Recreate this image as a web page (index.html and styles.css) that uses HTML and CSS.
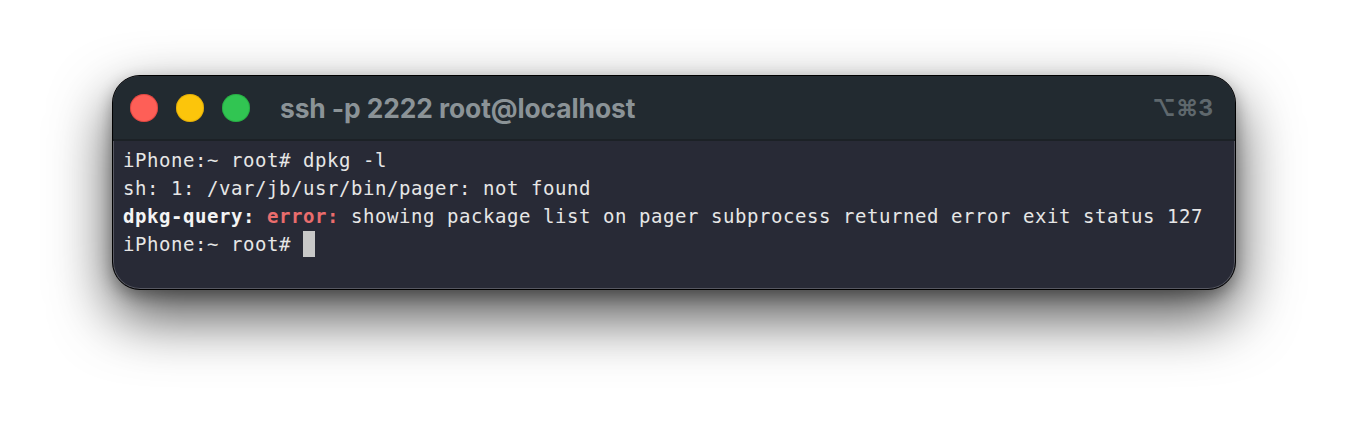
FILE: index.html
```html
<!DOCTYPE html>
<html>
<head>
<meta charset="utf-8">
<link rel="stylesheet" href="styles.css">
</head>
<body>
<div class="stage">
  <div class="window">
    <div class="titlebar">
      <div class="lights">
        <span class="light red"></span>
        <span class="light yellow"></span>
        <span class="light green"></span>
      </div>
      <div class="title">ssh -p 2222 root@localhost</div>
      <div class="shortcut">⌥⌘3</div>
    </div>
    <div class="term">
      <div class="line">iPhone:~ root# dpkg -l</div>
      <div class="line">sh: 1: /var/jb/usr/bin/pager: not found</div>
      <div class="line"><span class="bold">dpkg-query:</span> <span class="err">error:</span> showing package list on pager subprocess returned error exit status 127</div>
      <div class="line">iPhone:~ root# <span class="cursor"></span></div>
    </div>
  </div>
</div>
</body>
</html>
```
FILE: styles.css
```css
html, body {
  margin: 0;
  padding: 0;
  background: #ffffff;
  width: 1348px;
  height: 438px;
  overflow: hidden;
}
.stage {
  padding: 75px 0 0 112px;
}
.window {
  width: 1124px;
  height: 215px;
  box-sizing: border-box;
  border-radius: 28px;
  overflow: hidden;
  border: 1px solid #000;
  box-shadow: inset 0 0 0 1px rgba(255,255,255,0.22), 0 26px 60px rgba(0,0,0,0.7), 0 6px 16px rgba(0,0,0,0.3);
  background: #282a36;
  display: flex;
  flex-direction: column;
}
.titlebar {
  height: 63px;
  flex: none;
  background: #222a30;
  border-bottom: 2px solid #1c2126;
  display: flex;
  align-items: center;
  padding: 0 22px 0 17px;
  box-sizing: content-box;
}
.lights {
  display: flex;
  gap: 18px;
}
.light {
  width: 28px;
  height: 28px;
  border-radius: 50%;
  display: block;
}
.red { background: #fe5f57; box-shadow: inset 0 0 0 1px rgba(180,30,30,0.35); }
.yellow { background: #fcc50b; box-shadow: inset 0 0 0 1px rgba(180,130,0,0.3); }
.green { background: #31c552; box-shadow: inset 0 0 0 1px rgba(20,130,40,0.3); }
.title {
  margin-left: 30px;
  font-family: "Inter", "Liberation Sans", sans-serif;
  font-weight: 700;
  font-size: 26.4px;
  color: #8b9397;
  flex: 1;
  letter-spacing: -0.1px;
}
.shortcut {
  font-family: "Inter", "DejaVu Sans", sans-serif;
  font-weight: 700;
  font-size: 23px;
  color: #5f686d;
}
.term {
  flex: 1;
  padding: 5px 0 0 10px;
  font-family: "DejaVu Sans Mono", monospace;
  font-size: 19px;
  letter-spacing: 0.56px;
  line-height: 28px;
  color: #e6e6e6;
}
.line { white-space: pre; height: 28px; }
.bold { font-weight: 700; color: #f4f4f4; }
.err { font-weight: 700; color: #ea6d6d; }
.cursor {
  display: inline-block;
  width: 12px;
  height: 26px;
  background: #c8c8c8;
  vertical-align: top;
  margin-top: 1px;
}
```
